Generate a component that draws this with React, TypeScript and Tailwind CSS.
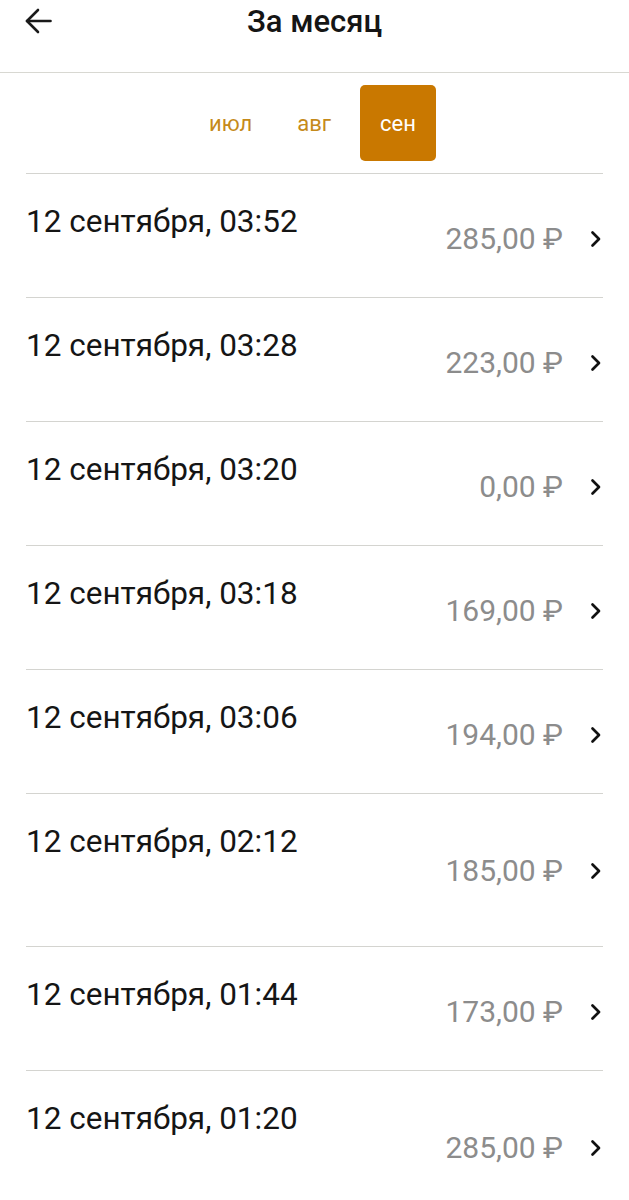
type Payment = {
    date: string;
    amount: string;
    tall?: boolean;
};

const payments: Payment[] = [
    { date: "12 сентября, 03:52", amount: "285,00 ₽" },
    { date: "12 сентября, 03:28", amount: "223,00 ₽" },
    { date: "12 сентября, 03:20", amount: "0,00 ₽" },
    { date: "12 сентября, 03:18", amount: "169,00 ₽" },
    { date: "12 сентября, 03:06", amount: "194,00 ₽" },
    { date: "12 сентября, 02:12", amount: "185,00 ₽", tall: true },
    { date: "12 сентября, 01:44", amount: "173,00 ₽" },
    { date: "12 сентября, 01:20", amount: "285,00 ₽", tall: true },
];

const months = [
    { label: "июл", className: "text-[#c58a1a]" },
    { label: "авг", className: "ml-[5px] text-[#c58a1a]" },
    { label: "сен", className: "ml-[9px] mr-[4px] bg-[#c97800] text-white" },
];

function Chevron() {
    return (
        <svg className="ml-[27px]" width="12" height="18" viewBox="0 0 12 18" fill="none" stroke="#111" strokeWidth="2.7" strokeLinecap="round" strokeLinejoin="round">
            <path d="M2.5 2.5 L9 9 L2.5 15.5" />
        </svg>
    );
}

function PaymentRow({ payment, last }: { payment: Payment; last: boolean }) {
    return (
        <div
            className={`${payment.tall ? "h-[153px]" : "h-[124px]"} ${last ? "" : "border-b border-[#d4d4d0]"} flex flex-col pt-[30px]`}
        >
            <p className="text-[31.5px] leading-[36px] text-[#151515]">
                {payment.date}
            </p>
            <div
                className={`${payment.tall ? "mt-[-7px]" : "mt-[-19px]"} flex items-center justify-end`}
            >
                <span className="text-[30px] leading-[36px] text-[#8c8c8c]">
                    {payment.amount}
                </span>
                <Chevron />
                <span className="w-[1px]" />
            </div>
        </div>
    );
}

export default function App() {
    return (
        <div className="w-[629px] min-h-[1200px] bg-white font-['Roboto',sans-serif] overflow-hidden">
            {/* Header */}
            <div className="relative h-[73px] border-b border-[#d8d8d2] flex items-start justify-center">
                <button className="absolute left-[25px] top-[8px] text-[#1a1a1a]">
                    <svg width="27" height="26" viewBox="0 0 27 26" fill="none" stroke="currentColor" strokeWidth="2.6" strokeLinecap="round" strokeLinejoin="round">
                        <path d="M25.5 13 H2" />
                        <path d="M13 2 L2 13 L13 24" />
                    </svg>
                </button>
                <h1 className="mt-[2px] text-[31px] leading-[40px] font-medium text-[#151515]">
                    За месяц
                </h1>
            </div>

            {/* Month tabs */}
            <div className="mx-[26px] h-[101px] border-b border-[#d4d4d0] flex items-center justify-center">
                {months.map((m) => (
                    <div
                        key={m.label}
                        className={`${m.className} h-[76px] px-[20px] rounded-[5px] flex items-center text-[22px]`}
                    >
                        {m.label}
                    </div>
                ))}
            </div>

            {/* Payments list */}
            <div className="mx-[26px]">
                {payments.map((p, i) => (
                    <PaymentRow
                        key={p.date}
                        payment={p}
                        last={i === payments.length - 1}
                    />
                ))}
            </div>
        </div>
    );
}
